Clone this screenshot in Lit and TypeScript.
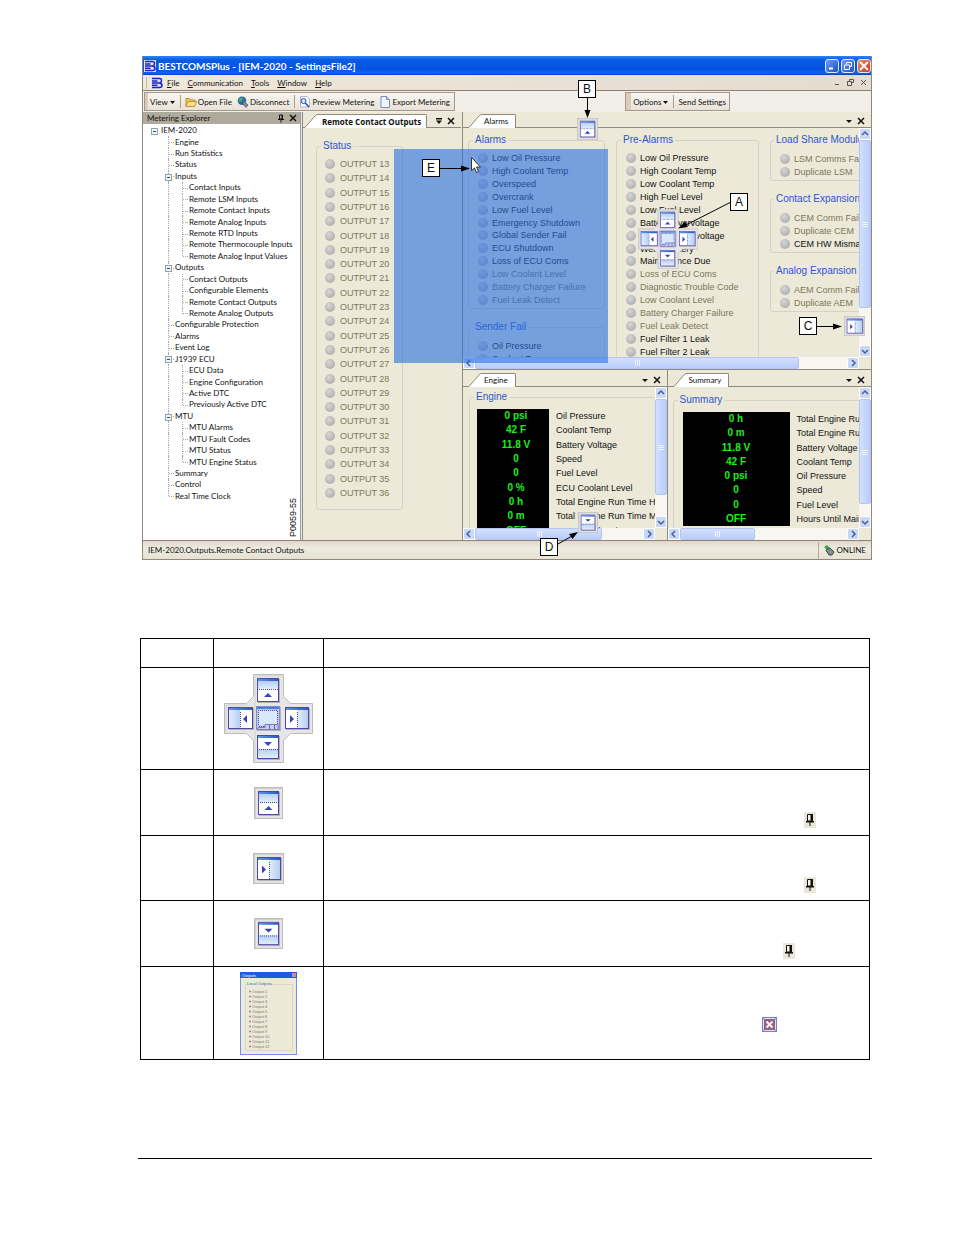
import { LitElement, html, svg, css, nothing } from "lit";
import { customElement, property } from "lit/decorators.js";

type Dir = "up" | "down" | "left" | "right";
type Item = { text: string; off?: boolean };
type Node = { text: string; depth: number; box?: boolean; last?: boolean };

const on = (...names: string[]): Item[] => names.map((text) => ({ text }));
const off = (...names: string[]): Item[] => names.map((text) => ({ text, off: true }));
const branch = (text: string, children: string[]): Node[] => [
  { text, depth: 1, box: true },
  ...children.map((c, i) => ({ text: c, depth: 2, last: i === children.length - 1 })),
];
const leaf = (text: string, last = false): Node => ({ text, depth: 1, last });

const TREE: Node[] = [
  { text: "IEM-2020", depth: 0, box: true },
  leaf("Engine"),
  leaf("Run Statistics"),
  leaf("Status"),
  ...branch("Inputs", [
    "Contact Inputs",
    "Remote LSM Inputs",
    "Remote Contact Inputs",
    "Remote Analog Inputs",
    "Remote RTD Inputs",
    "Remote Thermocouple Inputs",
    "Remote Analog Input Values",
  ]),
  ...branch("Outputs", ["Contact Outputs", "Configurable Elements", "Remote Contact Outputs", "Remote Analog Outputs"]),
  leaf("Configurable Protection"),
  leaf("Alarms"),
  leaf("Event Log"),
  ...branch("J1939 ECU", ["ECU Data", "Engine Configuration", "Active DTC", "Previously Active DTC"]),
  ...branch("MTU", ["MTU Alarms", "MTU Fault Codes", "MTU Status", "MTU Engine Status"]),
  leaf("Summary"),
  leaf("Control"),
  leaf("Real Time Clock", true),
];

const OUTPUTS = off(...Array.from({ length: 24 }, (_, i) => `OUTPUT ${13 + i}`));
const ALARMS = [
  ...on("Low Oil Pressure", "High Coolant Temp", "Overspeed", "Overcrank", "Low Fuel Level", "Emergency Shutdown",
    "Global Sender Fail", "ECU Shutdown", "Loss of ECU Coms"),
  ...off("Low Coolant Level", "Battery Charger Failure", "Fuel Leak Detect"),
];
const PRE_ALARMS = [
  ...on("Low Oil Pressure", "High Coolant Temp", "Low Coolant Temp", "High Fuel Level", "Low Fuel Level",
    "Battery Overvoltage", "Battery Undervoltage", "Weak Battery", "Maintenance Due"),
  ...off("Loss of ECU Coms", "Diagnostic Trouble Code", "Low Coolant Level", "Battery Charger Failure", "Fuel Leak Detect"),
  ...on("Fuel Filter 1 Leak", "Fuel Filter 2 Leak"),
];
const ENGINE = [
  ["0 psi", "Oil Pressure"],
  ["42 F", "Coolant Temp"],
  ["11.8 V", "Battery Voltage"],
  ["0", "Speed"],
  ["0", "Fuel Level"],
  ["0 %", "ECU Coolant Level"],
  ["0 h", "Total Engine Run Time H"],
  ["0 m", "Total Engine Run Time M"],
  ["OFF", "Hours Until Maintenance"],
];
const SUMMARY = [
  ["0 h", "Total Engine Run"],
  ["0 m", "Total Engine Run"],
  ["11.8 V", "Battery Voltage"],
  ["42 F", "Coolant Temp"],
  ["0 psi", "Oil Pressure"],
  ["0", "Speed"],
  ["0", "Fuel Level"],
  ["OFF", "Hours Until Main"],
];

/* ---------- docking guide drawings ---------- */

const gradients = svg`
  <defs>
    <linearGradient id="bar" x1="0" x2="1" y1="0" y2="0"><stop offset="0" stop-color="#5a94ee"/><stop offset="1" stop-color="#2a5cc4"/></linearGradient>
    <linearGradient id="glassV" x1="0" x2="0" y1="0" y2="1"><stop offset="0" stop-color="#b4d0f0"/><stop offset="1" stop-color="#e2effc"/></linearGradient>
    <linearGradient id="glassH" x1="0" x2="1" y1="0" y2="0"><stop offset="0" stop-color="#e2effc"/><stop offset="1" stop-color="#b4d0f0"/></linearGradient>
  </defs>`;

const pane = (x: number, y: number, w: number, h: number, dir: Dir) => {
  const cx = x + w / 2;
  const cy = y + h / 2;
  const vertical = dir === "up" || dir === "down";
  const split = vertical ? y + (dir === "up" ? 11 : 14) : x + 12;
  const glass =
    dir === "up" ? [x + 1, y + 3, w - 2, split - y - 3]
    : dir === "down" ? [x + 1, split, w - 2, y + h - split - 1]
    : dir === "left" ? [x + 1, y + 3, split - x - 1, h - 4]
    : [split, y + 3, x + w - split - 1, h - 4];
  const tri =
    dir === "up" ? `M${cx} ${y + 15}l4 4h-8z`
    : dir === "down" ? `M${cx} ${y + 11}l4 -4h-8z`
    : dir === "left" ? `M${x + 15} ${cy + 1}l4 -4v8z`
    : `M${x + 9} ${cy + 1}l-4 -4v8z`;
  return svg`
    <rect x=${x + 1} y=${y + 1} width=${w} height=${h} fill="#b4b2bb"/>
    <rect x=${x + 0.5} y=${y + 0.5} width=${w - 1} height=${h - 1} fill="#fff"/>
    <rect x=${glass[0]} y=${glass[1]} width=${glass[2]} height=${glass[3]} fill=${vertical ? "url(#glassV)" : "url(#glassH)"}/>
    <rect x=${x + 1} y=${y + 1} width=${w - 2} height="2" fill="url(#bar)"/>
    <rect x=${x + 0.5} y=${y + 0.5} width=${w - 1} height=${h - 1} fill="none" stroke="#5146ac"/>
    <path d=${vertical ? `M${x + 2} ${split + 0.5}H${x + w - 1}` : `M${split + 0.5} ${y + 5}V${y + h - 1}`} stroke="#4a3fa6" stroke-dasharray="1 1"/>
    <path d=${tri} fill="#3646b4"/>`;
};

const singleGuide = (dir: Dir, w: number, h: number) => {
  const wide = dir === "left" || dir === "right";
  const vw = wide ? 31 : 29;
  const vh = wide ? 31 : 32;
  return html`<svg class="guide" width=${w} height=${h} viewBox="0 0 ${vw} ${vh}" preserveAspectRatio="none" aria-hidden="true">
    ${gradients}
    <rect x="0.5" y="0.5" width=${vw - 1} height=${vh - 1} fill="#e4e4e4" stroke="#bcbcbc"/>
    <path d="M1.5 ${vh - 1}V1.5H${vw - 1}" fill="none" stroke="#cfcfcf"/>
    ${wide ? pane(4, 4, 24, 23, dir) : pane(4, 4, 21, 24, dir)}
  </svg>`;
};

const crossGuide = (size: number) => html`<svg class="guide" width=${size} height=${size} viewBox="0 0 89 89" aria-hidden="true">
  ${gradients}
  <path d="M29.5 0.5h30v22l7 7h22v30h-22l-7 7v22h-30v-22l-7 -7h-22v-30h22l7 -7z" fill="#e6e6e6" stroke="#bcbcbc"/>
  <path d="M31 87V2H58M2 58V31H24" fill="none" stroke="#d2d2d2"/>
  ${pane(33, 4, 22, 24, "up")}${pane(4, 33, 25, 22, "left")}${pane(61, 33, 24, 22, "right")}${pane(33, 61, 22, 24, "down")}
  <rect x="33" y="33" width="24" height="24" fill="#b4b2bb"/>
  <rect x="32.5" y="32.5" width="23" height="23" fill="#b9cdf0" stroke="#8a86cc"/>
  <rect x="33" y="33" width="22" height="2" fill="#4a7fd8"/>
  <rect x="35" y="37" width="18" height="14" fill="#d9e9fb"/>
  <path d="M34.500 51V36.500H53.500V50M35 52.500h6v-2h13" fill="none" stroke="#5a50b0" stroke-dasharray="1 1"/>
  <path d="M34 55.500q-1 -2 1 -2h6v-3h13v5z" fill="#c9d0ee" stroke="#7d78c4"/>
  <path d="M45.500 51v4M50.500 51v4" stroke="#6a62b8"/>
</svg>`;

const pin = html`<svg class="pin" width="12" height="16" viewBox="0 0 12 16" role="img" aria-label="Auto hide">
  <rect width="12" height="16" fill="#e9e6da"/>
  <path d="M3.500 2.500h5v6.500h-5z" fill="#f4f2ea" stroke="#111"/>
  <path d="M6.500 2h2.500v7h-2.500zM2 9h8v1.500h-8zM5.500 10h1v4h-1z" fill="#111"/>
</svg>`;

const closeMark = html`<svg width="8" height="8" viewBox="0 0 8 8" aria-hidden="true"><path d="M1 1l6 6M7 1l-6 6" stroke="#111" stroke-width="1.500"/></svg>`;
const downMark = html`<svg width="8" height="8" viewBox="0 0 8 8" aria-hidden="true"><path d="M1 3h6l-3 3z" fill="#111"/></svg>`;
const listMark = html`<svg width="8" height="8" viewBox="0 0 8 8" aria-hidden="true"><path d="M1 1h6v1.500h-6zM1 3.500h6l-3 3.500z" fill="#111"/></svg>`;
const dropMark = html`<svg width="6" height="6" viewBox="0 0 6 6" aria-hidden="true"><path d="M1 2h5l-2.500 3z" fill="#111"/></svg>`;

const appIcon = html`<svg width="12" height="12" viewBox="0 0 12 12" aria-hidden="true">
  <rect width="12" height="12" fill="#dfe3fb"/>
  <path d="M1 1.500h7.500q2 0 2 2q0 2 -2 2.500q2.500 0.500 2.500 2.500q0 2 -2.500 2h-7.500M1 4h5.500M1 6h7.500M1 8.300h5.500" fill="none" stroke="#1f22b8" stroke-width="1.500"/>
</svg>`;

const folderIcon = html`<svg width="12" height="12" viewBox="0 0 12 12" aria-hidden="true">
  <path d="M1 10.500V2.500h3.500l1 1.500H10v2" fill="#f2cf6a" stroke="#b98d2c"/><path d="M1 10.500l2-5h8.500l-2 5z" fill="#ffe08a" stroke="#c1952f"/>
</svg>`;
const globeIcon = html`<svg width="12" height="12" viewBox="0 0 12 12" aria-hidden="true">
  <circle cx="5" cy="4.800" r="4.300" fill="#2c67b8"/><path d="M2 3q2-2 4-1l-1 3l-3 1zM6 6l3-1l-1 3z" fill="#4fae54"/>
  <path d="M5.500 7.500l2-1.500l3.500 3l-2 2.500z" fill="#8d9299" stroke="#41474f" stroke-width="0.700"/>
</svg>`;
const previewIcon = html`<svg width="12" height="12" viewBox="0 0 12 12" aria-hidden="true">
  <path d="M1.500 0.500h6.500l2.500 2.500v8h-9z" fill="#fdfdff" stroke="#a9b8da"/><circle cx="4.500" cy="5" r="2.500" fill="#cfe2fa" stroke="#2c57a5"/>
  <path d="M6.300 7l3.700 4" stroke="#2c57a5" stroke-width="1.600"/>
</svg>`;
const exportIcon = html`<svg width="12" height="12" viewBox="0 0 12 12" aria-hidden="true">
  <path d="M2 0.500h5.500l3 3v8h-8.500z" fill="#f2f7ff" stroke="#6f8fc9"/><path d="M7.500 0.500v3h3" fill="#c4d7f5" stroke="#6f8fc9"/>
</svg>`;

/* ---------- scroll bar ---------- */

@customElement("xp-scroll")
class XpScroll extends LitElement {
  @property({ type: Boolean, reflect: true }) horizontal = false;
  @property({ type: Number }) thumb = 100;

  static styles = css`
    :host { display: flex; flex-direction: column; width: 12px; background: #f7f6f1; }
    :host([horizontal]) { flex-direction: row; width: auto; height: 12px; }
    button { flex: none; display: grid; place-items: center; width: 12px; height: 12px; padding: 0; border: 1px solid #fff; border-radius: 2px; background: #c8d8fb; }
    .track { flex: 1; min-width: 0; min-height: 0; display: flex; flex-direction: inherit; }
    .thumb { display: grid; place-items: center; box-sizing: border-box; width: 12px; border: 1px solid #b3c6f3; border-radius: 2px; background: linear-gradient(90deg, #d3e0ff, #b9cdfa); }
    :host([horizontal]) .thumb { width: auto; height: 12px; background: linear-gradient(#d3e0ff, #b9cdfa); }
  `;

  render() {
    const h = this.horizontal;
    const arrow = (d: string, label: string) => html`<button aria-label=${label}>
      <svg width="8" height="8" viewBox="0 0 8 8"><path d=${d} fill="none" stroke="#4d6185" stroke-width="1.500"/></svg>
    </button>`;
    return html`
      ${h ? arrow("M5 1l-3 3l3 3", "Scroll left") : arrow("M1 5l3 -3l3 3", "Scroll up")}
      <div class="track">
        <div class="thumb" style=${h ? `width:${this.thumb}%` : `height:${this.thumb}%`}>
          <svg width="6" height="6" viewBox="0 0 6 6"><path d=${h ? "M1.500 0v6M3.500 0v6M5.500 0v6" : "M0 1.500h6M0 3.500h6M0 5.500h6"} stroke="#eef4fe"/></svg>
        </div>
      </div>
      ${h ? arrow("M3 1l3 3l-3 3", "Scroll right") : arrow("M1 3l3 3l3 -3", "Scroll down")}
    `;
  }
}

/* ---------- page ---------- */

@customElement("app-root")
class AppRoot extends LitElement {
  static styles = css`
    :host { display: block; background: #fff; color: #111; font-family: "Liberation Sans", Arial, sans-serif; font-size: 9px; line-height: 12px; --ui: Lato, "Open Sans", sans-serif; }
    * { box-sizing: border-box; }
    button { font: inherit; color: inherit; background: none; border: 0; padding: 0; margin: 0; white-space: nowrap; }
    svg { display: block; flex: none; }
    .page { padding: 56px 82px 76px 138px; min-height: 1235px; }

    .window { position: relative; margin-left: 4px; border: solid #94877a; border-width: 0 1px 1px; background: #ece9d8; }
    .title { display: flex; align-items: center; height: 19px; padding: 0 0 0 1px; gap: 2px; color: #fff; background: linear-gradient(#2f86f5, #0a5be6 20%, #0453e0 70%, #0a66f8 90%, #0640b8); }
    .title h1 { flex: 1; margin: 0; font: bold 10px/14px Lato, sans-serif; white-space: nowrap; }
    .caps { display: flex; gap: 2px; }
    .cap { display: grid; place-items: center; width: 14px; height: 14px; border: 1px solid #dfe9fb; border-radius: 3px; background: linear-gradient(135deg, #6d9bf5, #1f4fd0); }
    .cap.close { background: linear-gradient(135deg, #ee8e6e, #c8381a); }

    .menu { display: flex; align-items: center; height: 16px; padding: 0 4px 0 3px; gap: 8px; font: 8px/12px var(--ui); background: linear-gradient(90deg, #efe9da, #e8e0d4 60%, #e3dccf); border-bottom: 1px solid #8f7f70; }
    .menu .grip { width: 2px; height: 12px; border-left: 1px solid #c5b8a4; }
    .menu .brand { display: flex; align-items: center; gap: 4px; margin-left: -5px; }
    .menu .mdi { margin-left: auto; display: flex; gap: 6px; }
    u { text-underline-offset: 1px; }

    .tools { display: flex; align-items: center; justify-content: space-between; height: 21px; padding: 0 141px 0 1px; background: #f1efe7; font: 8px/12px var(--ui); }
    .bar { display: flex; align-items: center; height: 19px; border: 1px solid #a5978a; padding: 0 4px 0 3px; background: linear-gradient(#f8f6f0, #e9e2d8); }
    .bar::before { content: ""; width: 3px; height: 17px; margin: 0 2px 0 -3px; background: #dccbb8; }
    .bar.opts { padding-right: 3px; }
    .bar.opts::before { width: 5px; }
    .bar button { display: flex; align-items: center; gap: 1px; }
    .bar .sep { width: 1px; height: 13px; margin: 0 4px 0 5px; background: #a99c8e; }
    .bar .wide { margin-left: 5px; }

    .body { display: grid; grid-template-columns: 158px 159px 1fr; column-gap: 1px; height: 428px; }
    .tree { display: flex; flex-direction: column; min-width: 0; background: #fff; border-right: 1px solid #8d9cb8; font: 8px/11px var(--ui); }
    .tree header { display: flex; align-items: center; height: 12px; padding: 0 3px 0 4px; background: #aeaa9c; }
    .tree header span { flex: 1; }
    .tree header button { margin-left: 4px; }
    .nodes { display: grid; grid-auto-rows: 1fr; height: 377px; margin: 1px 0 0; padding: 0 0 0 4px; list-style: none; }
    .nodes li { display: flex; align-items: center; white-space: nowrap; }
    .g { position: relative; align-self: stretch; width: 14px; }
    .v::before { content: ""; position: absolute; left: 7px; top: 0; bottom: 0; border-left: 1px dotted #a9a9a9; }
    .h::after { content: ""; position: absolute; left: 8px; right: 1px; top: 50%; border-top: 1px dotted #a9a9a9; }
    .root::after { content: none; }
    .end::before { bottom: 50%; }
    .box { position: absolute; z-index: 1; left: 4px; top: 3px; width: 7px; height: 7px; border: 1px solid #8ca3b5; background: #f4f6f4; }
    .box::before { content: ""; position: absolute; left: 1px; right: 1px; top: 2px; height: 1px; background: #445; }

    .doc { display: flex; flex-direction: column; min-width: 0; min-height: 0; border-left: 1px solid #8f8b7c; }
    .tabs { display: flex; align-items: flex-end; height: 16px; padding-right: 6px; font: 8px/13px var(--ui); }
    .tabs .lead, .tabs .fill { height: 14px; border-bottom: 1px solid #8f8b7c; }
    .tabs .lead { width: 2px; }
    .tabs .wide { width: 6px; }
    .tabs .fill { flex: 1; }
    .tabs .marks { display: flex; align-items: center; justify-content: flex-end; gap: 4px; height: 14px; border-bottom: 1px solid #8f8b7c; margin-right: -6px; padding-right: 6px; }
    .tab { height: 14px; padding: 0 7px 0 2px; background: #fff; border: solid #8f8b7c; border-width: 1px 1px 0 0; border-radius: 0 2px 0 0; }
    .tab.strong { padding: 0 5px 0 4px; font: bold 8px/13px "Open Sans", sans-serif; }

    fieldset { flex: none; min-width: 0; margin: 0; padding: 0; border: 1px solid #d6d3c4; border-radius: 3px; }
    legend { margin-left: 4px; padding: 0 2px; font-size: 10px; line-height: 12px; color: #2f55cc; white-space: nowrap; }
    .leds { display: grid; grid-auto-rows: 1fr; margin: 0; padding: 0 0 0 9px; list-style: none; }
    .leds li { display: flex; align-items: center; gap: 4px; white-space: nowrap; }
    .leds i { flex: none; width: 10px; height: 10px; border-radius: 50%; background: radial-gradient(circle at 40% 35%, #d6d6d6, #bcbcbc 50%, #a2a2a2); }
    .leds .off { color: #7c7858; }

    .status { width: 87px; margin: 12px 0 0 13px; padding: 5px 0 9px; }
    .status .leds { height: 343px; padding-left: 8px; }
    .status .leds li { gap: 5px; }

    .right { display: grid; grid-template-rows: 257px 1fr; min-width: 0; min-height: 0; }
    .lower { display: grid; grid-template-columns: 1fr 1fr; min-width: 0; min-height: 0; border-top: 1px solid #8f8b7c; }
    .lower .tabs { height: 17px; }
    .view { flex: 1; display: grid; grid-template: minmax(0, 1fr) 12px / minmax(0, 1fr) 12px; min-height: 0; min-width: 0; }
    .clip { display: flex; overflow: hidden; }
    .alarms { padding: 6px 0 0 5px; gap: 11px; align-items: flex-start; }
    .alarms .col { flex: none; display: flex; flex-direction: column; gap: 12px; }
    .c1 { width: 137px; }
    .c2 { width: 143px; }
    .c3 { width: 170px; }
    .c3 legend { margin-left: 3px; }
    .alarms fieldset { padding: 6px 0 2px; }
    .r2 { height: 26px; }
    .r3 { height: 39px; }
    .r12 { height: 154px; }
    .r16 { height: 206px; }

    .meter { padding: 4px 0 0 6px; align-items: flex-start; }
    .meter fieldset { width: 230px; padding: 6px 0 4px; }
    .meter.sum { padding: 7px 0 0 5px; }
    .meter.sum fieldset { width: 270px; }
    table.vals { border-collapse: collapse; height: 129px; margin-left: 7px; }
    .sum table.vals { height: 114px; margin-left: 9px; }
    .vals th, .vals td { padding: 0; line-height: 12px; white-space: nowrap; }
    .vals td { width: 72px; background: #000; color: #18f018; font-size: 10px; font-weight: bold; text-align: center; padding: 0 2px 0 8px; }
    .sum .vals td { width: 107px; padding: 0 2px; }
    .vals th { padding-left: 7px; font-weight: normal; text-align: left; }

    .foot { display: flex; align-items: center; height: 19px; padding: 0 5px; border-top: 1px solid #8e8175; background: linear-gradient(#e0d9cb, #eeebdf 40%, #e6e2d4); font: 8px/12px var(--ui); }
    .foot span:first-child { flex: 1; }
    .foot .online { display: flex; align-items: center; gap: 1px; height: 17px; border-left: 1px solid #b5ad9c; padding-left: 4px; }

    .over { position: absolute; }
    .drop { left: 251px; top: 93px; width: 214px; height: 214px; background: rgba(39, 110, 225, 0.6); }
    .lines { left: -1px; top: 0; }
    .part { left: 145px; top: 442px; font-size: 9px; line-height: 10px; writing-mode: vertical-rl; rotate: 180deg; }
    .mark { display: grid; place-items: center; width: 18px; height: 18px; border: 1px solid #000; background: #fff; font-size: 12px; line-height: 14px; }
    .mE { left: 279px; top: 103px; }
    .mB { left: 435px; top: 24px; }
    .mA { left: 587px; top: 137px; }
    .mC { left: 656px; top: 261px; }
    .mD { left: 397px; top: 482px; }
    .gA { left: 495px; top: 153px; }
    .gB { left: 434px; top: 62px; }
    .gC { left: 701px; top: 260px; }
    .gD { left: 435px; top: 456px; }

    .legend { width: calc(100% - 4px); margin: 78px 2px 0; border-collapse: collapse; table-layout: fixed; }
    .legend th, .legend td { border: 1px solid #000; padding: 0; }
    .legend .k { width: 73px; }
    .legend .p { width: 110px; }
    .legend .guide, .legend .mini { margin: 0 auto; }
    .legend .note { vertical-align: bottom; padding: 0 53px 7px 0; }
    .legend .note.d { padding-right: 74px; }
    .legend .note.e { padding: 0 92px 27px 0; }
    .note svg { margin-left: auto; }
    .h0 { height: 29px; }
    .h1 { height: 102px; }
    .h2 { height: 66px; }
    .h3 { height: 65px; }
    .h5 { height: 93px; }
    .rule { margin: 98px 0 0; border: 0; border-top: 1px solid #000; }
  `;

  private leds(items: Item[], rows: string) {
    return html`<ul class="leds ${rows}">
      ${items.map((i) => html`<li class=${i.off ? "off" : nothing}><i></i>${i.text}</li>`)}
    </ul>`;
  }

  private group(title: string, items: Item[], rows: string, cls = "") {
    return html`<fieldset class=${cls}><legend>${title}</legend>${this.leds(items, rows)}</fieldset>`;
  }

  private tabs(title: string, strong = false) {
    return html`<div class="tabs">
      <span class="lead ${strong ? "" : "wide"}"></span>
      <svg width="13" height="14" viewBox="0 0 13 14" aria-hidden="true">
        <path d="M0 14L10 2q1 -1.500 3 -1.500V14z" fill="#fff"/><path d="M0 13.500L10 2q1 -1.500 3 -1.500" fill="none" stroke="#8f8b7c"/>
      </svg>
      <button class="tab ${strong ? "strong" : ""}">${title}</button>
      <span class="fill"></span>
      <span class="marks"><button aria-label="Window list">${strong ? listMark : downMark}</button><button aria-label="Close">${closeMark}</button></span>
    </div>`;
  }

  private values(rows: string[][]) {
    return html`<table class="vals"><tbody>
      ${rows.map(([v, n]) => html`<tr><td>${v}</td><th scope="row">${n}</th></tr>`)}
    </tbody></table>`;
  }

  private node(n: Node) {
    const box = n.box ? html`<button class="box" aria-label="Collapse ${n.text}"></button>` : nothing;
    if (n.depth === 0) return html`<li><span class="g h root">${box}</span>${n.text}</li>`;
    if (n.depth === 1) return html`<li><span class="g"></span><span class="g v h ${n.last ? "end" : ""}">${box}</span>${n.text}</li>`;
    return html`<li><span class="g"></span><span class="g v"></span><span class="g v h ${n.last ? "end" : ""}"></span>${n.text}</li>`;
  }

  private window() {
    return html`<section class="window">
      <header class="title">
        ${appIcon}
        <h1>BESTCOMSPlus - [IEM-2020 - SettingsFile2]</h1>
        <div class="caps">
          <button class="cap" aria-label="Minimize"><svg width="8" height="8"><path d="M1 6.500h4" stroke="#fff" stroke-width="2"/></svg></button>
          <button class="cap" aria-label="Restore"><svg width="8" height="8"><path d="M2.500 2.500v-2h5v4h-2M0.500 3h5v4.500h-5z" fill="none" stroke="#fff"/></svg></button>
          <button class="cap close" aria-label="Close"><svg width="10" height="10"><path d="M1 1l8 8M9 1l-8 8" stroke="#fff" stroke-width="1.800"/></svg></button>
        </div>
      </header>
      <nav class="menu">
        <span class="grip"></span>
        <span class="brand">${appIcon}<button><u>F</u>ile</button></span>
        <button><u>C</u>ommunication</button><button><u>T</u>ools</button><button><u>W</u>indow</button><button><u>H</u>elp</button>
        <span class="mdi">
          <button aria-label="Minimize document"><svg width="7" height="7"><path d="M1 5.500h4" stroke="#555"/></svg></button>
          <button aria-label="Restore document"><svg width="7" height="7"><path d="M2.500 2v-1.500h4v3h-1.500M0.500 2.500h4v4h-4z" fill="none" stroke="#555"/></svg></button>
          <button aria-label="Close document"><svg width="7" height="7"><path d="M1 1l5 5M6 1l-5 5" stroke="#555"/></svg></button>
        </span>
      </nav>
      <div class="tools">
        <div class="bar">
          <button>View${dropMark}</button><span class="sep"></span>
          <button>${folderIcon}Open File</button><button class="wide">${globeIcon}Disconnect</button><span class="sep"></span>
          <button>${previewIcon}Preview Metering</button><button class="wide">${exportIcon}Export Metering</button>
        </div>
        <div class="bar opts"><button>Options${dropMark}</button><span class="sep"></span><button>Send Settings</button></div>
      </div>
      <div class="body">
        <aside class="tree">
          <header><span>Metering Explorer</span>
            <button aria-label="Auto hide"><svg width="8" height="9"><path d="M2.500 1h3v4h-3zM1 5.500h6M4 5.500v3" fill="none" stroke="#111"/><path d="M5 1v4" stroke="#111"/></svg></button>
            <button aria-label="Close">${closeMark}</button>
          </header>
          <ul class="nodes">${TREE.map((n) => this.node(n))}</ul>
        </aside>
        <section class="doc">
          ${this.tabs("Remote Contact Outputs", true)}
          ${this.group("Status", OUTPUTS, "", "status")}
        </section>
        <div class="right">
          <section class="doc">
            ${this.tabs("Alarms")}
            <div class="view">
              <div class="clip alarms">
                <div class="col c1">
                  ${this.group("Alarms", ALARMS, "r12")}
                  ${this.group("Sender Fail", on("Oil Pressure", "Coolant Temp"), "r2")}
                </div>
                <div class="col c2">${this.group("Pre-Alarms", PRE_ALARMS, "r16")}</div>
                <div class="col c3">
                  ${this.group("Load Share Module", off("LSM Comms Fail", "Duplicate LSM"), "r2")}
                  ${this.group("Contact Expansion M", [...off("CEM Comm Fail", "Duplicate CEM"), ...on("CEM HW Mismatch")], "r3")}
                  ${this.group("Analog Expansion M", off("AEM Comm Fail", "Duplicate AEM"), "r2")}
                </div>
              </div>
              <xp-scroll .thumb=${82}></xp-scroll>
              <xp-scroll horizontal .thumb=${87}></xp-scroll>
            </div>
          </section>
          <div class="lower">
            <section class="doc">
              ${this.tabs("Engine")}
              <div class="view">
                <div class="clip meter"><fieldset><legend>Engine</legend>${this.values(ENGINE)}</fieldset></div>
                <xp-scroll .thumb=${82}></xp-scroll>
                <xp-scroll horizontal .thumb=${76}></xp-scroll>
              </div>
            </section>
            <section class="doc">
              ${this.tabs("Summary")}
              <div class="view">
                <div class="clip meter sum"><fieldset><legend>Summary</legend>${this.values(SUMMARY)}</fieldset></div>
                <xp-scroll .thumb=${90}></xp-scroll>
                <xp-scroll horizontal .thumb=${45}></xp-scroll>
              </div>
            </section>
          </div>
        </div>
      </div>
      <footer class="foot">
        <span>IEM-2020.Outputs.Remote Contact Outputs</span>
        <span class="online">
          <svg width="12" height="12" viewBox="0 0 12 12" aria-hidden="true"><path d="M1 3l3-2l3 3l-2 3z" fill="#3fa648"/><path d="M3 6l4-2l4 4l-2 3h-3z" fill="#8a8f94" stroke="#3d4a3f"/></svg>
          ONLINE
        </span>
      </footer>

      <div class="over drop"></div>
      <div class="over part">P0059-55</div>
      <div class="over gA">${crossGuide(60)}</div>
      <div class="over gB">${singleGuide("up", 21, 22)}</div>
      <div class="over gC">${singleGuide("right", 21, 20)}</div>
      <div class="over gD">${singleGuide("down", 20, 21)}</div>
      <svg class="over lines" width="730" height="504" viewBox="142 56 730 504" aria-hidden="true">
        <g stroke="#000" fill="none"><path d="M440 168.500H464M587.500 98V112M731 202L686 225M817 326.500H836M558 544L572 536"/></g>
        <path d="M470 168.500l-9 -3v6zM587.500 118l-3 -8h6zM678 228.500l10 -1.500l-3 -5.500zM842 326.500l-9 -3v6zM578 532l-9 2l3.500 5z"/>
        <path d="M471.500 157.500v13l3 -2.500l2 4.500l2 -1l-2 -4.500h4z" fill="#fff" stroke="#111" stroke-width="0.800"/>
      </svg>
      <div class="over mark mE">E</div>
      <div class="over mark mB">B</div>
      <div class="over mark mA">A</div>
      <div class="over mark mC">C</div>
      <div class="over mark mD">D</div>
    </section>`;
  }

  private mini() {
    return html`<svg class="mini" width="57" height="83" viewBox="0 0 57 83">
      <rect x="0.500" y="0.500" width="56" height="82" fill="#ece9d8" stroke="#6f94ea"/>
      <rect width="57" height="6" fill="#1b5fe0"/>
      <rect x="52" y="1" width="4" height="4" fill="#e08a7c"/>
      <rect x="5.500" y="12.500" width="47" height="66" rx="1" fill="none" stroke="#dad6c4"/>
      <rect x="7" y="9" width="22" height="5" fill="#ece9d8"/>
      <g font-family="Liberation Sans, sans-serif" font-size="4">
        <text x="2" y="5" fill="#fff">Outputs</text>
        <text x="7" y="13" fill="#3460c8">Local Outputs</text>
        ${Array.from({ length: 12 }, (_, i) => svg`
          <circle cx="10" cy=${19.5 + i * 5} r="1" fill="#8d8d86"/>
          <text x="12" y=${21 + i * 5} fill="#77745f">${`Output ${i + 1}`}</text>`)}
      </g>
    </svg>`;
  }

  render() {
    return html`<main class="page">
      ${this.window()}
      <table class="legend">
        <tbody>
          <tr class="h0"><th class="k"></th><th class="p"></th><th></th></tr>
          <tr class="h1"><td></td><td>${crossGuide(89)}</td><td></td></tr>
          <tr class="h2"><td></td><td>${singleGuide("up", 29, 32)}</td><td class="note">${pin}</td></tr>
          <tr class="h3"><td></td><td>${singleGuide("right", 31, 31)}</td><td class="note">${pin}</td></tr>
          <tr class="h2"><td></td><td>${singleGuide("down", 29, 31)}</td><td class="note d">${pin}</td></tr>
          <tr class="h5"><td></td><td>${this.mini()}</td><td class="note e">
            <svg width="15" height="15" viewBox="0 0 15 15" role="img" aria-label="Close">
              <rect width="15" height="15" fill="#6a83d8"/><rect x="1.500" y="1.500" width="12" height="12" rx="1" fill="#96607f" stroke="#e4e2f2"/>
              <path d="M4.500 4.500l6 6M10.500 4.500l-6 6" stroke="#fff" stroke-width="2"/>
            </svg></td></tr>
        </tbody>
      </table>
      <hr class="rule" />
    </main>`;
  }
}
